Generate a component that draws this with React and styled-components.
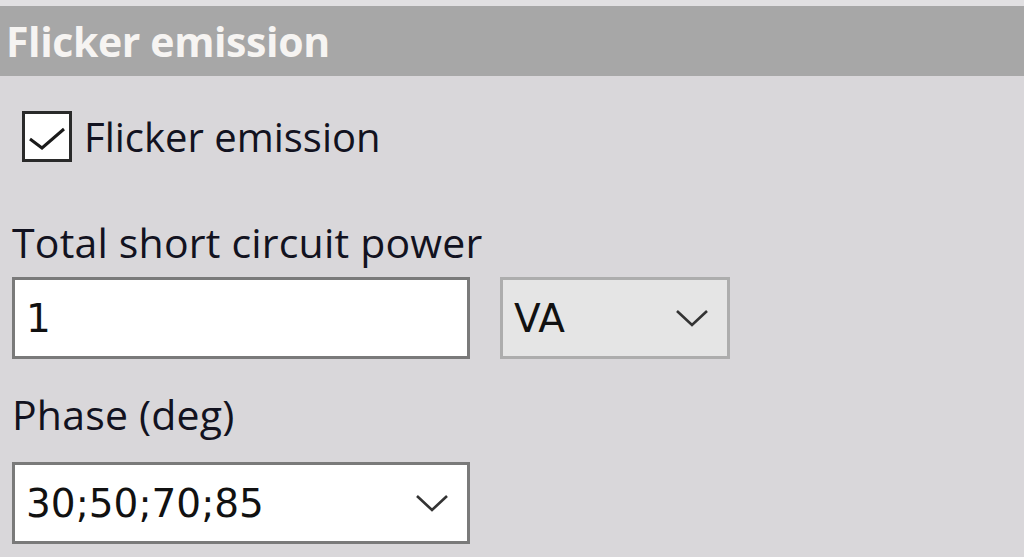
import React from 'react'
import styled, { createGlobalStyle } from 'styled-components'

const Global = createGlobalStyle`
  html, body {
    margin: 0;
    padding: 0;
    background: #d9d7da;
  }
  body {
    width: 1024px;
    height: 557px;
    overflow: hidden;
  }
`

const Panel = styled.div`
  width: 1024px;
  height: 557px;
  background: #d9d7da;
  border-top: 6px solid #e1e0e2;
  box-sizing: border-box;
`

const Header = styled.div`
  height: 70px;
  background: #a7a7a7;
  display: flex;
  align-items: center;
  padding-left: 6px;
  font-family: "Open Sans", "Noto Sans", sans-serif;
  font-weight: 700;
  font-size: 41px;
  color: #f6f4f2;
  letter-spacing: -0.4px;
`

const Body = styled.div`
  padding: 0 12px;
  display: flex;
  flex-direction: column;
  font-family: "Open Sans", "Noto Sans", sans-serif;
  color: #121220;
`

const CheckRow = styled.label`
  display: flex;
  align-items: center;
  gap: 12px;
  margin-top: 35px;
  margin-left: 10px;
  height: 51px;
  font-size: 40px;
`

const Box = styled.span`
  width: 50px;
  height: 51px;
  box-sizing: border-box;
  border: 3px solid #2a2a2a;
  background: #fff;
  display: flex;
  align-items: center;
  justify-content: center;
`

const FieldLabel = styled.div`
  font-size: 41px;
  line-height: 56px;
  letter-spacing: 0.2px;
  margin-top: ${p => p.$top}px;
  margin-bottom: ${p => p.$bottom}px;
`

const Row = styled.div`
  display: flex;
  gap: 30px;
`

const Field = styled.div`
  width: ${p => p.$w}px;
  height: 82px;
  box-sizing: border-box;
  border: 3px solid ${p => (p.$muted ? '#adadad' : '#7a7a7a')};
  background: ${p => (p.$muted ? '#e5e5e5' : '#fff')};
  display: flex;
  align-items: center;
  justify-content: space-between;
  padding: 0 18px 0 11px;
  font-family: "DejaVu Sans", sans-serif;
  font-size: 39px;
  color: #111;
`

const Chevron = () => (
  <svg width="34" height="20" viewBox="0 0 34 20">
    <path d="M2 3 L17 17 L32 3" fill="none" stroke="#333" strokeWidth="2.6" />
  </svg>
)

export default function App() {
  return (
    <>
      <Global />
      <Panel>
        <Header>Flicker emission</Header>
        <Body>
          <CheckRow>
            <Box>
              <svg width="40" height="34" viewBox="0 0 40 34">
                <path d="M3 19 L15 28 L37 9" fill="none" stroke="#1a1a1a" strokeWidth="3" />
              </svg>
            </Box>
            Flicker emission
          </CheckRow>
          <FieldLabel $top={52} $bottom={7}>Total short circuit power</FieldLabel>
          <Row>
            <Field $w={458}>1</Field>
            <Field $w={230} $muted>
              VA
              <Chevron />
            </Field>
          </Row>
          <FieldLabel $top={27} $bottom={20}>Phase (deg)</FieldLabel>
          <Field $w={458}>
            30;50;70;85
            <Chevron />
          </Field>
        </Body>
      </Panel>
    </>
  )
}
